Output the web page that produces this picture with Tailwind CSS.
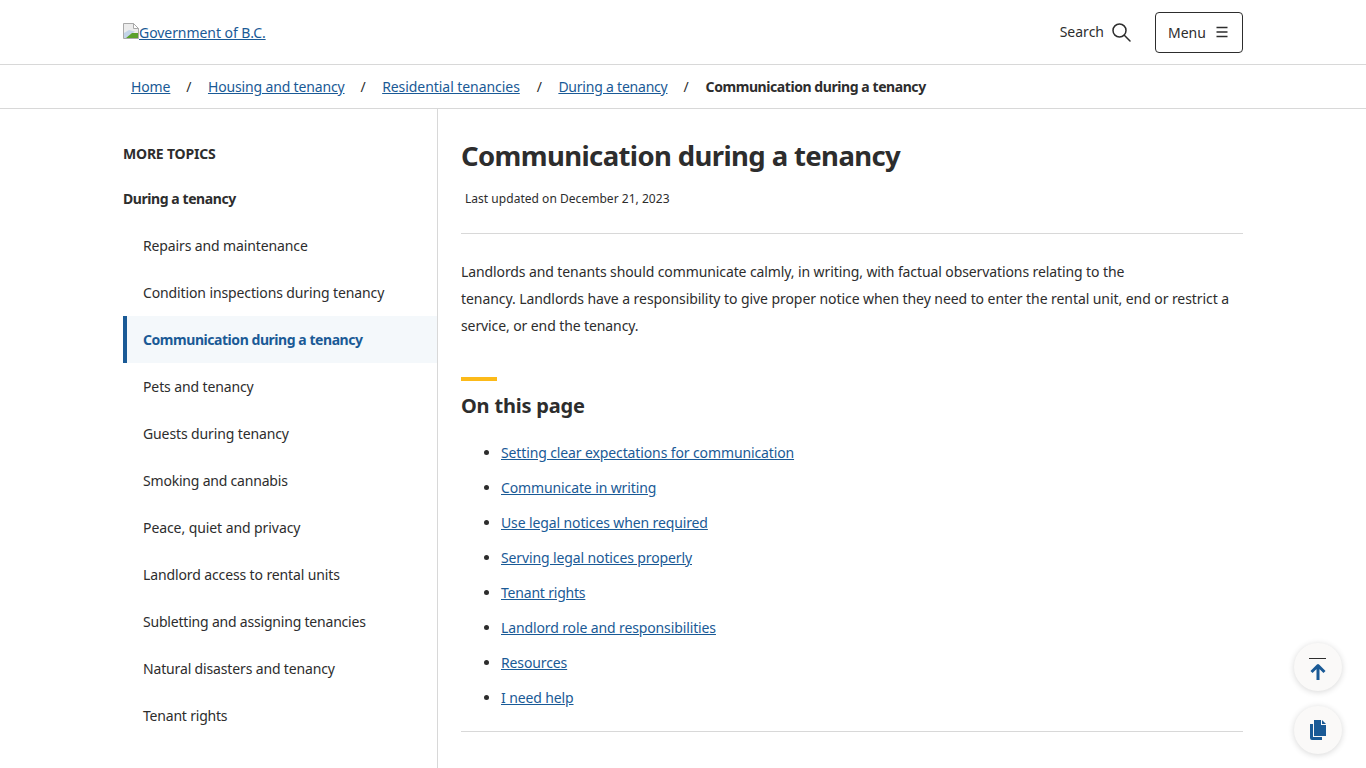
<!doctype html>
<html lang="en"><head><meta charset="utf-8"><title>Communication during a tenancy</title>
<script src="https://cdn.jsdelivr.net/npm/@tailwindcss/browser@4"></script></head>
<body class="h-[768px] overflow-hidden bg-white font-['Noto_Sans',sans-serif] text-[#2d2d2d] text-[14px] tracking-[-0.12px]">
<header class="h-[65px] border-b border-[#d8d8d8] pl-[123px] pr-[123px] flex items-center justify-between">
  <a href="#" class="flex items-center text-[#1a5a96] underline text-[14px] tracking-[-0.06px]">
    <svg class="w-4 h-4 -mt-[2px]" viewBox="0 0 16 16"><path d="M.5.5h10l5 5v10H.5z" fill="#ececec" stroke="#a9a9a9"/><path d="M10.500.5v5h5z" fill="#fff" stroke="#a9a9a9"/><path d="M1 10l5-3 6 1.500-9 6.500H1z" fill="#c3d4e8"/><path d="M3 15l6-5 6 0v5z" fill="#5aa02c"/></svg>
    <span>Government of B.C.</span>
  </a>
  <div class="flex items-center">
    <span class="text-[14px] tracking-normal -mt-[2px]">Search</span>
    <svg class="ml-[7px] w-[20px] h-[20px]" viewBox="0 0 20 20" fill="none" stroke="#2d2d2d" stroke-width="1.500"><circle cx="8.500" cy="8.500" r="6.500"/><path d="M13.300 13.300l5.700 5.700" stroke-linecap="round"/></svg>
    <button class="ml-[24px] w-[88px] h-[41px] border border-[#2d2d2d] rounded-[4px] flex items-center pl-[12px] tracking-normal">
      <span class="text-[14px]">Menu</span>
      <svg class="ml-[9px] w-[14px] h-[12px]" viewBox="0 0 14 12" stroke="#2d2d2d" stroke-width="1.400"><path d="M1.500 1.500h11M1.500 6h11M1.500 10.500h11"/></svg>
    </button>
  </div>
</header>
<nav class="h-[44px] border-b border-[#d8d8d8] pl-[131px] flex items-center">
  <a href="#" class="text-[#1a5a96] underline">Home</a><span class="mx-[16px]">/</span>
  <a href="#" class="text-[#1a5a96] underline ml-[0.500px] tracking-[-0.15px]">Housing and tenancy</a><span class="mx-[16px]">/</span>
  <a href="#" class="text-[#1a5a96] underline ml-[0.500px] tracking-[-0.06px]">Residential tenancies</a><span class="mx-[16px] ml-[17px]">/</span>
  <a href="#" class="text-[#1a5a96] underline ml-[0.500px] tracking-[-0.22px]">During a tenancy</a><span class="mx-[16px] mr-[17px]">/</span>
  <b class="font-bold tracking-[-0.43px]">Communication during a tenancy</b>
</nav>
<div class="flex h-[659px]">
  <aside class="w-[315px] ml-[123px] border-r border-[#d8d8d8] shrink-0">
    <p class="font-bold mt-[35px] h-[20px] leading-[20px] tracking-[-0.2px]">MORE TOPICS</p>
    <p class="font-bold mt-[25px] h-[20px] leading-[20px] tracking-[-0.43px]">During a tenancy</p>
    <ul class="mt-[13px]">
      <li class="h-[47px] pl-[20px] flex items-center">Repairs and maintenance</li>
      <li class="h-[47px] pl-[20px] flex items-center">Condition inspections during tenancy</li>
      <li class="h-[47px] pl-[16px] flex items-center border-l-4 border-[#1a5a96] bg-[#f4f8fb] text-[#1a5a96] font-bold tracking-[-0.45px]">Communication during a tenancy</li>
      <li class="h-[47px] pl-[20px] flex items-center">Pets and tenancy</li>
      <li class="h-[47px] pl-[20px] flex items-center">Guests during tenancy</li>
      <li class="h-[47px] pl-[20px] flex items-center tracking-[-0.2px]">Smoking and cannabis</li>
      <li class="h-[47px] pl-[20px] flex items-center tracking-[-0.08px]">Peace, quiet and privacy</li>
      <li class="h-[47px] pl-[20px] flex items-center">Landlord access to rental units</li>
      <li class="h-[47px] pl-[20px] flex items-center tracking-[-0.2px]">Subletting and assigning tenancies</li>
      <li class="h-[47px] pl-[20px] flex items-center tracking-[-0.15px]">Natural disasters and tenancy</li>
      <li class="h-[47px] pl-[20px] flex items-center tracking-[-0.2px]">Tenant rights</li>
    </ul>
  </aside>
  <main class="ml-[23px] w-[782px]">
    <h1 class="text-[27.5px] font-bold leading-[38px] mt-[28px] tracking-[-0.62px]">Communication during a tenancy</h1>
    <p class="text-[12px] leading-[18px] mt-[15px] ml-[4px] tracking-[0.03px]">Last updated on December 21, 2023</p>
    <hr class="border-[#d8d8d8] mt-[25px]">
    <p class="leading-[27px] mt-[24px] tracking-[-0.1px]">Landlords and tenants should communicate calmly, in writing, with factual observations relating to the<br><span class="tracking-[-0.07px]">tenancy. Landlords have a responsibility to give proper notice when they need to enter the rental unit, end or restrict a</span> service, or end the tenancy.</p>
    <div class="w-[36px] h-[4px] bg-[#fcba19] mt-[38px]"></div>
    <h2 class="text-[20px] font-bold leading-[28px] mt-[11px] tracking-[-0.2px]">On this page</h2>
    <ul class="list-disc pl-[40px] mt-[15px] text-[#1a5a96] marker:text-[#2d2d2d]">
      <li class="h-[35px] leading-[35px]"><a href="#" class="underline">Setting clear expectations for communication</a></li>
      <li class="h-[35px] leading-[35px]"><a href="#" class="underline">Communicate in writing</a></li>
      <li class="h-[35px] leading-[35px]"><a href="#" class="underline">Use legal notices when required</a></li>
      <li class="h-[35px] leading-[35px]"><a href="#" class="underline">Serving legal notices properly</a></li>
      <li class="h-[35px] leading-[35px]"><a href="#" class="underline tracking-[-0.2px]">Tenant rights</a></li>
      <li class="h-[35px] leading-[35px]"><a href="#" class="underline">Landlord role and responsibilities</a></li>
      <li class="h-[35px] leading-[35px]"><a href="#" class="underline">Resources</a></li>
      <li class="h-[35px] leading-[35px]"><a href="#" class="underline">I need help</a></li>
    </ul>
    <hr class="border-[#d8d8d8] mt-[16px]">
  </main>
</div>
<button class="fixed left-[1294px] top-[643px] w-[48px] h-[48px] rounded-full bg-[#faf9f8] shadow-[0_1px_6px_rgba(0,0,0,0.16)] flex items-center justify-center">
  <svg class="w-[20px] h-[26px]" viewBox="0 0 20 26" fill="none"><path d="M1 4.500h17" stroke="#2d2d2d" stroke-width="1"/><path d="M10 26V12.500M3.500 18L10 11.500l6.500 6.500" stroke="#1a5a96" stroke-width="3" stroke-linejoin="round"/></svg>
</button>
<button class="fixed left-[1294px] top-[706px] w-[48px] h-[48px] rounded-full bg-[#faf9f8] shadow-[0_1px_6px_rgba(0,0,0,0.16)] flex items-center justify-center">
  <svg class="w-[18px] h-[20px]" viewBox="0 0 18 20" fill="#1a5a96"><path d="M5 0h7v5h5v11H5z"/><path d="M13 0l4 4h-4z"/><path d="M1 4h3v13h9v3H3a2 2 0 0 1-2-2z"/></svg>
</button>
</body></html>
